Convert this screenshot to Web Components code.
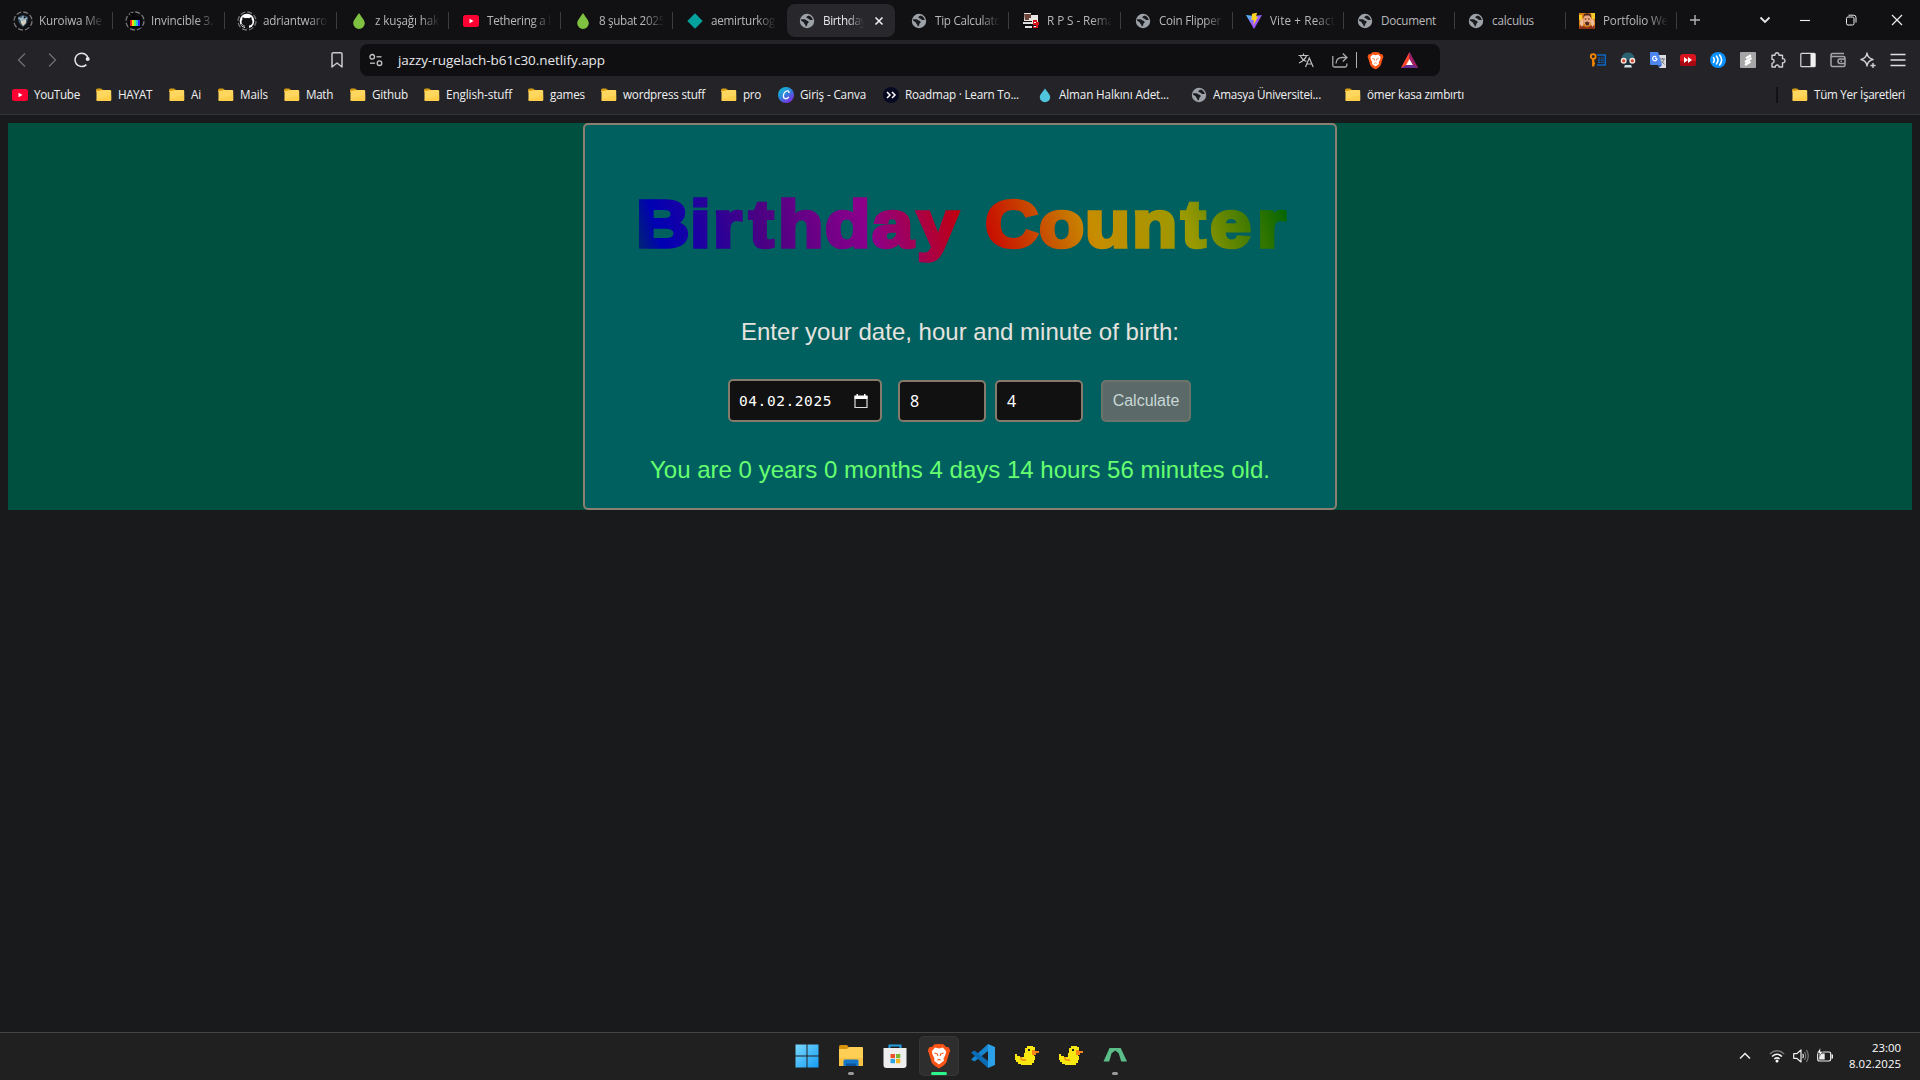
<!DOCTYPE html>
<html lang="tr">
<head>
<meta charset="utf-8">
<title>Birthday Counter</title>
<style>
html,body{margin:0;width:1920px;height:1080px;overflow:hidden;background:#191a1c;font-family:"Open Sans","Noto Sans",sans-serif}
</style>
</head>
<body>
<desktop-screen></desktop-screen>
<script>
const globe='<circle cx="8" cy="8" r="7.2" fill="#9da2a8"/><path d="M2.200 6.300L6 6.200C7 7.300 8.500 7.500 9.300 8.300 10.200 9.200 9.500 10.200 8.500 10.500 8.200 11.500 8.300 12.500 7.300 13.600 6.300 13.300 6.600 12 5.900 11.300 4.800 10.600 5.300 9.500 4.200 9 3.400 8.600 2.300 8.300 2 7.600zM9.800 2.500C8.800 3.400 7.300 3.300 7.400 4.400 7.600 5.400 9 5 9.800 5.900 10.500 7 11.800 7.200 13.800 6.800 13.300 4.800 12 3.200 9.800 2.500z" fill="#1a1b1e"/>';
const dash='<circle cx="10" cy="10" r="9" fill="none" stroke="#77777a" stroke-width="1.300" stroke-dasharray="5 2.070"/>';
const lion='<path d="M8 0l3 .2 1.500 1.600 2 .3 1 2.300-.6 1.500-2 6.500C12 14 9.500 15.500 8 16.300 6.500 15.500 4 14 3.100 12.400L1.100 5.900.5 4.400l1-2.300 2-.3L5 .2z" fill="#fb5416"/><path d="M8 3l2.600-.6 2.200 2.400-.5 2.400-1.300 2.500.3 1.500L8 13.700 4.700 11.200 5 9.700 3.700 7.200l-.5-2.400 2.200-2.400z" fill="#fff"/><path d="M5 6l2 .7.2 1.300M11 6l-2 .7-.2 1.300M6.900 10.800L8 10.200l1.100.6" fill="none" stroke="#fb5416" stroke-width=".7"/>';
const duck='<path d="M12 2h6v1h2v3h-1v6h1v4h-1v3h-2v2H6v-1H3v-2H1v-2H0v-6h2v2h3v1h4V9h1V4h2z" fill="#f9e711"/><path d="M5 13h2v2h4v2H7l-2-2z" fill="#f39b13"/><path d="M13 5h2v2h-2z" fill="#222"/><path d="M17 6h3v1h4v2h-3v2h-4z" fill="#f98617"/>';
const ICONS={
globe:[16,globe],
shield:[20,dash+'<path d="M5 6l5-2 5 2c0 4-1 7-5 10-4-3-5-6-5-10z" fill="#3a5c72"/><path d="M7 7l6-1v6l-3 3-2-3z" fill="#d6cdbb"/><path d="M5.500 7l4 2M10 5v4l4-2" stroke="#9ab4c6" stroke-width="1.500"/>'],
tv:[20,dash+'<path d="M5 2l4 4 3-4M4 6h12v10H4z" fill="#050505" stroke="#050505"/><path d="M5 9h2v6H5z" fill="#e22"/><path d="M7 9h2v6H7z" fill="#fd0"/><path d="M9 9h2v6H9z" fill="#5f5"/><path d="M11 9h2v6h-2z" fill="#2bd"/><path d="M13 9h2v6h-2z" fill="#32f"/>'],
github:[20,dash+'<circle cx="10" cy="10" r="7.300" fill="#fff"/><path d="M8 17.500v-3c-2-.2-3.500-1.200-3.500-3.500 0-1 .3-1.700.9-2.400-.2-.8-.1-1.500.2-2.300.9 0 1.600.5 2.200.9 1.500-.3 2.900-.3 4.400 0 .6-.4 1.300-.9 2.200-.9.3.8.4 1.500.2 2.300.6.7.9 1.400.9 2.400 0 2.300-1.500 3.300-3.500 3.500v3z" fill="#111113"/><path d="M4 13.300l2 1.800h2" stroke="#111113" fill="none"/>'],
drop:[16,'<path d="M8 0c2 3.500 5.800 7 5.800 10.300a5.800 5.700 0 0 1-11.600 0C2.200 7 6 3.500 8 0z" fill="#7fc242"/>'],
bluedrop:[16,'<path d="M8 1.500c1.800 3 5.200 5.800 5.200 8.800a5.200 5 0 0 1-10.400 0C2.800 7.300 6.200 4.500 8 1.500z" fill="#50c4dd"/>'],
youtube:[16,'<rect y="2" width="16" height="12" rx="2.500" fill="#ff0033"/><path d="M6.500 5.700v4.600L10.500 8z" fill="#fff"/>'],
diamond:[16,'<path d="M8 .3L15.700 8 8 15.700.3 8z" fill="#05a29e"/>'],
rps:[16,'<path d="M1 0h11v2h3v9H9V8H1z" fill="#e8e6e4"/><path d="M1 1h7v4H6v2H2z" fill="#6b453a"/><path d="M0 8h7v1H0zM8 0h4v2H8zM0 11h9v2H0z" fill="#0a0a0a"/><path d="M0 9h9v2H0zM2 13h7v2H2z" fill="#ddd"/><path d="M10 7h4v2h2v3h-1v3h-5v-2h3v-1h-3z" fill="#d41118"/><path d="M11 9h2v1h-2zM11 13h2v1h-2z" fill="#fff"/>'],
vite:[16,'<defs><linearGradient id="v" x2="1" y2="1"><stop stop-color="#41d1ff"/><stop offset=".5" stop-color="#9a5bff"/><stop offset="1" stop-color="#a94bff"/></linearGradient></defs><path d="M0 2l8 1 8-1-8 14z" fill="url(#v)"/><path d="M6 .7l5-1-1 4h2L7.500 12l.3-5H5.500z" fill="#ffd21e"/>'],
photo:[16,'<rect width="16" height="16" fill="#d98012"/><path d="M0 2h3v5H0zM12 0h4v6h-3z" fill="#f8ca2a"/><path d="M4.500 4l1.500-2h4.500l1.500 2v5.500L9.800 13H7L4.500 9.500z" fill="#e7a882"/><path d="M4 5l1-4 3-1 3.500 1 .8 4-2-2.500H6zM5.800 9.500l2.200-1 2.500 1-.8 3H7z" fill="#54281b"/><path d="M0 16l1-4 5 1.500 2 1 2-1 5-2 1 4.500z" fill="#8d2f17"/><path d="M1.500 7L4 5.500 4.500 11 3 14 .8 11zM14.800 7l-2.500-1.500L12 11l1.500 3 2-3z" fill="#efbd9a"/><path d="M5.800 6h1.500M9 6h1.500" stroke="#411"/>'],
folder:[16,'<path d="M0 3.200Q0 1.500 1.500 1.500H5L7 3h6.500v2H0z" fill="#d79d14"/><path d="M.5 4.200L6.500 3h7.700q1 0 1 1v9q0 1-1 1H1.500q-1 0-1-1z" fill="#ffd65e"/><path d="M.5 12l14.700-4v5q0 1-1 1H1.500q-1 0-1-1z" fill="#ffcb43" opacity=".7"/>'],
canva:[16,'<defs><linearGradient id="c" x1="0" y1="0" x2=".7" y2="1"><stop stop-color="#08cbd0"/><stop offset=".5" stop-color="#2b87dc"/><stop offset="1" stop-color="#7f2be3"/></linearGradient></defs><circle cx="8" cy="8" r="8" fill="url(#c)"/><path d="M10.700 6c.5-1 .4-2-.8-2.200C7.300 3.500 5.300 6.700 5.400 9c.1 3.500 3.600 3.500 5.300.8" fill="none" stroke="#fff" stroke-width="1.300"/>'],
roadmap:[16,'<circle cx="8" cy="8" r="8" fill="#060922"/><path d="M4 5l3 3-3 3M9 5l3 3-3 3" fill="none" stroke="#fff" stroke-width="1.500"/>'],
back:[16,'<path d="M11 1.500L4.500 8l6.500 6.500" fill="none" stroke="#6f6f73" stroke-width="1.300"/>'],
fwd:[16,'<path d="M5 1.500L11.500 8 5 14.500" fill="none" stroke="#6f6f73" stroke-width="1.300"/>'],
reload:[16,'<path d="M12.400 12.600A6.700 6.700 0 1 1 14.100 6" fill="none" stroke="#e6e6e8" stroke-width="1.500"/><circle cx="13.700" cy="7" r="2" fill="#e6e6e8"/>'],
mark:[16,'<path d="M3 2q0-1.200 1.200-1.200h7.600Q13 .8 13 2v13l-5-4-5 4z" fill="none" stroke="#c9c9cc" stroke-width="1.500" stroke-linejoin="round"/>'],
tune:[16,'<g fill="none" stroke="#c5c5c8" stroke-width="1.300"><circle cx="4.200" cy="4.800" r="2.300"/><path d="M8.500 4.800h5"/><circle cx="11.500" cy="11.200" r="2.300"/><path d="M2 11.200h5"/></g>'],
translate:[16,'<path d="M.5 3.500h10M5.500 1.500v2M8.500 3.500C7.500 7 4.500 9.500 1 11M2.500 4c1 2.500 3.500 4.500 6 5.500M7.500 15L11.300 6l3.900 9M9 12h4.700" fill="none" stroke="#bfbfc2" stroke-width="1.200"/>'],
share:[16,'<path d="M.8 4v9.500Q.8 15 2.300 15h11q1.500 0 1.500-1.500v-2M4 11.500c.2-4 2.500-6 6.500-6h4M10.800 1.500l4.200 4-4.200 4" fill="none" stroke="#a8a8ac" stroke-width="1.300"/>'],
lion:[16,lion],
bat:[16,'<path d="M8 0L0 15h16z" fill="#662d91"/><path d="M8 0L0 15l8-4.500z" fill="#ff4724"/><path d="M8 0l8 15-8-4.500z" fill="#9e1f63"/><path d="M8 6.500l3.200 5.700H4.800z" fill="#fff"/>'],
key:[16,'<circle cx="3.200" cy="4.500" r="2.400" fill="none" stroke="#f58700" stroke-width="1.800"/><path d="M3.200 7v7.500M3 11.500h2" stroke="#f58700" stroke-width="2.200"/><path d="M7 3h8.300v10H7" fill="none" stroke="#0b66c3" stroke-width="1.500"/><path d="M8 6h6M8 8.200h6M8 10.400h6" stroke="#0b66c3" stroke-width="1.200" stroke-dasharray="2 .7"/>'],
face:[16,'<path d="M1.500 8V6Q2.500.5 8 .5T14.500 6v2z" fill="#2c6170"/><path d="M4 9h8v6.500H4z" fill="#17303c"/><path d="M5 13h6l1 2.500H4z" fill="#d5dce0"/><circle cx="3.700" cy="8.800" r="3" fill="#f2e4df"/><circle cx="12.300" cy="8.800" r="3" fill="#f2e4df"/><circle cx="3.700" cy="8.800" r="1.600" fill="#d1442b"/><circle cx="12.300" cy="8.800" r="1.600" fill="#d1442b"/>'],
gtr:[16,'<path d="M7 3h9v13H9z" fill="#dadce0"/><path d="M10 7h5M12.500 6v1M14 7c-.6 2.500-2 4-3.500 5M11 8.500l3.500 4" stroke="#6f7780" fill="none"/><path d="M0 0h8l4 13H1q-1 0-1-1z" fill="#4c86ee"/><path d="M7 6.300H4.800M6.200 4.900a2.200 2.200 0 1 0 .8 1.600" fill="none" stroke="#fff" stroke-width="1.200"/><path d="M8.500 13H12l-3 3z" fill="#2c5fc4"/>'],
ff:[16,'<rect y="2" width="16" height="12" rx="3" fill="#d9141f"/><path d="M0 9h16v2q0 3-3 3H3q-3 0-3-3z" fill="#a90711"/><path d="M4 5l4 3-4 3zM8 5l4 3-4 3z" fill="#fff"/>'],
sound:[16,'<circle cx="8" cy="8" r="8" fill="#0a90ff"/><path d="M3.500 5.700q1.700 2.300 0 4.600M6.500 4.200q3 3.800 0 7.600M9.600 3q4 5 0 10" fill="none" stroke="#fff" stroke-width="1.600" stroke-linecap="round"/>'],
sgrey:[16,'<rect width="16" height="16" rx="1" fill="#a6a6a6"/><path d="M11 3.300L6 6.200M11.500 6L5 10M10.500 9.500L5 13" fill="none" stroke="#fff" stroke-width="2.200"/>'],
puzzle:[16,'<path d="M2 3.200h3c-.5-3.200 4.500-3.200 4 0h3.500v3.500c3.300-.5 3.300 4.600 0 4.100V15H9c.4-2.700-4-2.700-3.600 0H2v-3.800c2.700.3 2.700-4.300 0-4z" fill="none" stroke="#cfcfd2" stroke-width="1.400" stroke-linejoin="round"/>'],
panel:[16,'<rect x=".8" y="1.300" width="14.400" height="13.400" rx="1" fill="none" stroke="#d8d8da" stroke-width="1.200"/><path d="M10.500 1.500h4.500v13h-4.500z" fill="#f1f1f2"/>'],
wallet:[16,'<path d="M1 3.500V13q0 1.500 1.500 1.500h11q1.500 0 1.500-1.500V6q0-1.500-1.500-1.500h-11Q1 4.500 1 3t1.500-1.500H14M15 7H10q-2 0-2 2.200t2 2.200h5M10.500 9.200h1.500" fill="none" stroke="#a5a5a9" stroke-width="1.500"/>'],
spark:[16,'<path d="M7 1c.5 4 2 5.500 6 6.500-4 1-5.500 2.500-6 6.500-.5-4-2-5.500-6-6.500 4-1 5.500-2.500 6-6.500zM13 11v5M10.500 13.500h5" fill="none" stroke="#d3d3d6" stroke-width="1.400" stroke-linejoin="round"/>'],
menu:[16,'<path d="M.5 2.500h15M.5 8h15M.5 13.500h15" stroke="#e0e0e3" stroke-width="1.400"/>'],
plus:[16,'<path d="M8 3v10M3 8h10" stroke="#b5b5b8" stroke-width="1.400"/>'],
chev:[16,'<path d="M3.500 5.500L8 10l4.500-4.500" fill="none" stroke="#e8e8e8" stroke-width="1.800"/>'],
min:[16,'<path d="M3 8.500h10" stroke="#eee" stroke-width="1.100"/>'],
restore:[16,'<rect x="3.500" y="5" width="7.500" height="8" rx="1.500" fill="none" stroke="#eee"/><path d="M5.500 3.200h5Q13 3.200 13 5.500v5" fill="none" stroke="#eee"/>'],
close:[16,'<path d="M3 3l10 10M13 3L3 13" stroke="#eee" stroke-width="1.200"/>'],
x:[16,'<path d="M4.500 4.500l7 7M11.500 4.500l-7 7" stroke="#eee" stroke-width="1.600"/>'],
start:[24,'<defs><linearGradient id="w" x2="1" y2="1"><stop stop-color="#79d8ff"/><stop offset="1" stop-color="#159cf2"/></linearGradient></defs><path d="M.5.500h11v11H.5zM12.500.500h11v11h-11zM.5 12.500h11v11H.5zM12.500 12.500h11v11h-11z" fill="url(#w)"/>'],
explorer:[24,'<path d="M0 2.500Q0 1 1.500 1H8l2 2.500V7H0z" fill="#d8920c"/><path d="M0 5h8l2-2h13q1 0 1 1v18H0z" fill="#ffce54"/><path d="M0 14h24v8H0z" fill="#f8bd3b" opacity=".7"/><path d="M4.500 22v-5q0-1.500 1.500-1.500h12q1.500 0 1.500 1.500v5z" fill="#1477c8"/><path d="M7 19.500h10V22H7z" fill="#0c559c"/>'],
store:[24,'<path d="M6.500 5V1.500h11V5" fill="none" stroke="#219fe0" stroke-width="2"/><path d="M.5 4h23v17q0 3-3 3h-17q-3 0-3-3z" fill="#eeeeee"/><path d="M7.500 10H12v4.200H7.500z" fill="#e9522b"/><path d="M13 10h4.300v4.200H13z" fill="#7cb82f"/><path d="M7.500 15H12v4.200H7.500z" fill="#29a3e3"/><path d="M13 15h4.300v4.200H13z" fill="#f5b51d"/>'],
code:[24,'<path d="M17 0l7 3v18l-7 3z" fill="#2b9fe8"/><path d="M17 0v7L3.500 17.500 0 15.500z" fill="#1684cf"/><path d="M17 24v-7L3.500 6.500 0 8.500z" fill="#0b6cb5"/>'],
duck:[24,duck],
arch:[24,'<path d="M6.500 4h5.300L8.500 9.500 6.200 17.500H.5zM12.500 4h5.200L24 17.500h-5.800L15.800 9.500zM9.500 4h5.500l1.500 6-4.200-3.500L7.500 10z" fill="#5bbd88"/>'],
up:[16,'<path d="M3 10.500l5-5 5 5" fill="none" stroke="#eee" stroke-width="1.500"/>'],
wifi:[16,'<path d="M.8 6q7.200-6.500 14.400 0" fill="none" stroke="#77777a" stroke-width="1.400"/><path d="M3 8.500q5-4.500 10 0M5.300 11q2.700-2.300 5.400 0" fill="none" stroke="#f3f3f3" stroke-width="1.500"/><circle cx="8" cy="13" r="1.500" fill="#fff"/>'],
speaker:[16,'<path d="M.7 5.700h3L8 2v12L3.700 10.300h-3z" fill="none" stroke="#eee" stroke-width="1.200" stroke-linejoin="round"/><path d="M9.700 5.800q1.500 2.200 0 4.400" fill="none" stroke="#eee" stroke-width="1.200"/><path d="M11.500 4q2.500 4 0 8M13.500 2q3.500 6 0 12" fill="none" stroke="#77777a" stroke-width="1.200"/>'],
battery:[16,'<rect x=".7" y="4" width="13" height="9" rx="1.700" fill="none" stroke="#eee" stroke-width="1.200"/><path d="M14.500 6.500h1.500v4h-1.500zM2.200 5.500h5.500v6H2.200z" fill="#eee"/><path d="M3.500-.5L0 5h2.500l-1 4L6 3.500H3.500z" fill="#fff" stroke="#202020" stroke-width=".6"/>'],
cal:[16,'<path d="M2 3.500h12v11H2z" fill="none" stroke="#ddd" stroke-width="1.200"/><path d="M1.500 2.500h13v3.500h-13zM3.500 1h1.500v2H3.500zM11 1h1.500v2H11z" fill="#fff"/>']
};
const define=(tag,render,after)=>customElements.define(tag,class extends HTMLElement{
  connectedCallback(){
    if(this.shadowRoot)return;
    this.attachShadow({mode:'open'}).innerHTML=render(this);
    if(after)after(this);
  }
});
define('ui-icon',e=>{const [n,b]=ICONS[e.getAttribute('name')];const s=e.getAttribute('size')||n;
  return `<style>:host{display:block;flex:none;width:${s}px;height:${s}px}svg{display:block;overflow:visible}</style><svg width="${s}" height="${s}" viewBox="0 0 ${n} ${n}">${b}</svg>`});
/* Text run tracked so that it spans exactly the width in its w attribute. */
define('fit-text',()=>`<style>:host{display:block;white-space:pre;flex:none}span{display:inline-block}</style><span><slot></slot></span>`,
  e=>{const s=e.shadowRoot.querySelector('span'),w=+e.getAttribute('w');
    s.style.letterSpacing=(w-s.getBoundingClientRect().width)/e.textContent.length+'px';
    e.style.width=w+'px'});
define('browser-tab',e=>{const a=e.hasAttribute('active');return `<style>
:host{display:block;flex:none;width:${e.getAttribute('pitch')}px;height:40px;color:${a?'#e8e8ea':'#b8b8bb'};font-size:11.7px}
.b{display:flex;align-items:center;box-sizing:border-box;height:33px;margin:4px 2px 0;padding-left:10px;border-radius:8px;${a?'background:#28282c;':''}}
.i{width:20px;display:flex;justify-content:center;flex:none}
.t{margin:-2px 0 0 6px;flex:none;width:${a?41:65}px;overflow:hidden;-webkit-mask-image:linear-gradient(90deg,#000 ${a?'58%':'70%'},transparent)}
:host([full]) .t{-webkit-mask-image:none}
.s{margin-left:8px;width:1px;height:17px;background:#3d3d40;flex:none}
.x{margin-left:7px}
</style><div class="b"><div class="i"><ui-icon name="${e.getAttribute('icon')}"></ui-icon></div><div class="t"><slot></slot></div>${a?'<ui-icon class="x" name="x"></ui-icon>':e.hasAttribute('nosep')?'':'<div class="s"></div>'}</div>`});
define('tab-strip',()=>{
 const T=[['shield','Kuroiwa Me',63],['tv','Invincible 3.',62],['github','adriantwaro',64],['drop','z kuşağı hak',64],['youtube','Tethering a l',64],['drop','8 şubat 2025',66],['diamond','aemirturkog',64,'nosep'],['globe','Birthday',43,'active'],['globe','Tip Calculato',66],['rps','R P S - Rema',67],['globe','Coin Flipper',62],['vite','Vite + React',65],['globe','Document',55,'full'],['globe','calculus',42,'full'],['photo','Portfolio We',65]];
 return `<style>:host{display:flex;height:40px;background:#111113;padding-left:1px;align-items:flex-start}.n{margin:12px 0 0 11px}.c{display:flex;margin:12px 15px 0 auto;gap:30px}.c ui-icon:first-child{margin-right:-6px}</style>`+
 T.map(([i,t,w,f],n)=>`<browser-tab icon="${i}" pitch="${n<10?112:111}" ${f||''}><fit-text w="${w}">${t}</fit-text></browser-tab>`).join('')+
 `<ui-icon class="n" name="plus"></ui-icon><div class="c">${['chev','min','restore','close'].map(n=>`<ui-icon name="${n}"></ui-icon>`).join('')}</div>`});
define('address-bar',()=>`<style>:host{display:flex;align-items:center;box-sizing:border-box;width:1080px;height:32px;margin-left:15px;padding:0 22px 0 8px;border-radius:8px;background:#0f0f11;color:#e8e8ea;font-size:13.5px;flex:none}
.u{margin-left:14px}.r{margin-left:auto;display:flex;align-items:center}.l{width:1px;height:16px;background:#b0b0b3;margin:0 10px 0 8px}.b{margin-right:17px}.s{margin-left:18px}</style>
<ui-icon name="tune"></ui-icon><fit-text class="u" w="207">jazzy-rugelach-b61c30.netlify.app</fit-text>
<div class="r"><ui-icon name="translate"></ui-icon><ui-icon class="s" name="share"></ui-icon><div class="l"></div><ui-icon class="b" name="lion" size="17"></ui-icon><ui-icon name="bat" size="17"></ui-icon></div>`);
define('nav-bar',()=>`<style>:host{display:flex;align-items:center;height:40px;background:#242428;padding-left:14px}.n{display:flex;gap:14px}.m{margin-left:239px}.e{display:flex;gap:14px;margin:0 14px 0 auto}</style>
<div class="n"><ui-icon name="back"></ui-icon><ui-icon name="fwd"></ui-icon><ui-icon name="reload"></ui-icon></div><ui-icon class="m" name="mark"></ui-icon><address-bar></address-bar>
<div class="e">${['key','face','gtr','ff','sound','sgrey','puzzle','panel','wallet','spark','menu'].map(n=>`<ui-icon name="${n}"></ui-icon>`).join('')}</div>`);
define('book-mark',e=>`<style>:host{display:flex;align-items:center;gap:6px;flex:none;width:${e.getAttribute('pitch')}px}slot{display:block;margin-top:-2px}</style><ui-icon name="${e.getAttribute('icon')}"></ui-icon><slot></slot>`);
define('bookmark-bar',()=>{
 const B=[['youtube','YouTube',46,34],['folder','HAYAT',34,118],['folder','Ai',10,191],['folder','Mails',28,240],['folder','Math',27,306],['folder','Github',36,372],['folder','English-stuff',66,446],['folder','games',35,550],['folder','wordpress stuff',82,623],['folder','pro',18,743],['canva','Giriş - Canva',66,800],['roadmap','Roadmap · Learn To...',114,905],['bluedrop','Alman Halkını Adet...',110,1059],['globe','Amasya Üniversitei...',108,1213],['folder','ömer kasa zımbırtı',97,1367]];
 return `<style>:host{display:flex;box-sizing:border-box;height:35px;padding:0 0 5px 12px;border-bottom:1px solid #343438;background:#242428;color:#f0f0f2;font-size:11.7px;align-items:center}.l{width:2px;height:16px;background:#121214;margin-left:auto}.a{margin-left:14px}</style>`+
 B.map((b,i)=>`<book-mark icon="${b[0]}" pitch="${(B[i+1]?B[i+1][3]:1486)-b[3]}"><fit-text w="${b[2]}">${b[1]}</fit-text></book-mark>`).join('')+
 `<div class="l"></div><book-mark class="a" icon="folder" pitch="128"><fit-text w="91">Tüm Yer İşaretleri</fit-text></book-mark>`});
define('entry-field',e=>`<style>:host{display:flex;align-items:center;box-sizing:border-box;width:${e.getAttribute('width')}px;height:${e.getAttribute('height')||42}px;border:2px solid #857a6c;border-radius:5px;background:#111112;color:#fff;padding:0 8px 0 9px;font-size:16px}</style><slot></slot>`);
/* Title letters are heavied by a stroke of the same gradient and set at their own x positions. */
const TITLE_X=[636,690,713,749,778,825,872,917,960,985,1039,1085,1132,1181,1210,1257].map(v=>((v-585)/1.1).toFixed(1)).join(' ');
define('rainbow-title',()=>`<style>:host{display:block;height:152px}svg{display:block}text{font:700 67.4px "Liberation Sans",Arial,sans-serif}</style>
<svg width="750" height="152"><defs><linearGradient id="g" gradientUnits="userSpaceOnUse" x1="35" y1="205.200" x2="723" y2="-1.200" gradientTransform="scale(.90909 1)">
<stop offset="0" stop-color="#006400"/><stop offset=".09" stop-color="#0000b4"/><stop offset=".23" stop-color="#4b0082"/><stop offset=".37" stop-color="#8b008b"/><stop offset=".515" stop-color="#c80000"/><stop offset=".67" stop-color="#c88c00"/><stop offset=".8" stop-color="#999900"/><stop offset=".94" stop-color="#006400"/></linearGradient></defs>
<g transform="scale(1.1 1)"><text x="${TITLE_X}" y="122.200" fill="url(#g)" stroke="url(#g)" stroke-width="3.600">Birthday Counter</text></g></svg>`);
define('birthday-card',()=>`<style>
:host{display:block;box-sizing:border-box;width:754px;height:387px;border:2px solid #8a7f71;border-radius:5px;background:#005f5f;font-family:"Liberation Sans",Arial,sans-serif}
.p{margin:41px 0 0;padding-left:156px;font-size:24px;line-height:28px;color:#e6e3df}
.f{display:flex;align-items:center;margin:33px 0 0 143px}
.g{margin-left:16px}.h{margin-left:9px}
button{margin:0 0 0 18px;width:90px;height:42px;border:2px solid #6c7469;border-radius:5px;background:#5b6969;color:#c8d8d6;font:16px "Liberation Sans",Arial,sans-serif;padding:0}
.d{font:14.5px "DejaVu Sans Mono",monospace}.k{margin-left:auto;margin-right:3px}
.n{font-family:"Noto Sans",sans-serif;padding-left:1px}
.r{margin:34px 0 0;padding-left:65px;font-size:24px;line-height:28px;color:#66ff70}
</style><rainbow-title></rainbow-title>
<div class="p"><fit-text w="438">Enter your date, hour and minute of birth:</fit-text></div>
<div class="f"><entry-field width="154" height="43"><fit-text class="d" w="93">04.02.2025</fit-text><ui-icon class="k" name="cal"></ui-icon></entry-field>
<entry-field class="g" width="88"><span class="n">8</span></entry-field><entry-field class="h" width="88"><span class="n">4</span></entry-field><button>Calculate</button></div>
<div class="r"><fit-text w="620">You are 0 years 0 months 4 days 14 hours 56 minutes old.</fit-text></div>`);
define('page-view',()=>`<style>:host{display:block;height:917px;box-sizing:border-box;padding:8px 8px 0;background:#191a1c}.s{display:flex;justify-content:center;background:#00503f;height:387px}</style><div class="s"><birthday-card></birthday-card></div>`);
define('task-item',e=>`<style>:host{display:flex;flex-direction:column;align-items:center;box-sizing:border-box;width:40px;height:40px;padding-top:8px;border-radius:5px;position:relative;flex:none}
:host([active]){background:#2e2e2e;box-shadow:inset 0 0 0 1px #353535}
i{position:absolute;bottom:1px;width:6px;height:3px;border-radius:2px;background:#9a9a9a}
:host([active]) i{width:16px;background:#2bf58b}</style><ui-icon name="${e.getAttribute('icon')}" size="24"></ui-icon>${e.hasAttribute('run')?'<i></i>':''}`);
define('task-bar',()=>`<style>:host{display:flex;box-sizing:border-box;height:48px;border-top:1px solid #454545;background:#202020;padding:3px 19px 0 787px;color:#fff;font-size:11.4px}.t{display:flex;gap:4px}.y{display:flex;align-items:center;margin-left:auto;height:40px}.w{margin-left:16px}.v{margin-left:8px}.c{margin-left:16px;width:52px;display:flex;flex-direction:column;align-items:flex-end;line-height:16px;padding-bottom:1px}</style>
<div class="t"><task-item icon="start"></task-item><task-item icon="explorer" run></task-item><task-item icon="store"></task-item><task-item icon="lion" run active></task-item><task-item icon="code"></task-item><task-item icon="duck"></task-item><task-item icon="duck"></task-item><task-item icon="arch" run></task-item></div>
<div class="y"><ui-icon name="up"></ui-icon><ui-icon class="w" name="wifi"></ui-icon><ui-icon class="v" name="speaker"></ui-icon><ui-icon class="v" name="battery"></ui-icon><div class="c"><fit-text w="29">23:00</fit-text><fit-text w="52">8.02.2025</fit-text></div></div>`);
define('desktop-screen',()=>`<style>:host{display:flex;flex-direction:column;width:1920px;height:1080px}</style><tab-strip></tab-strip><nav-bar></nav-bar><bookmark-bar></bookmark-bar><page-view></page-view><task-bar></task-bar>`);
</script>
</body>
</html>
